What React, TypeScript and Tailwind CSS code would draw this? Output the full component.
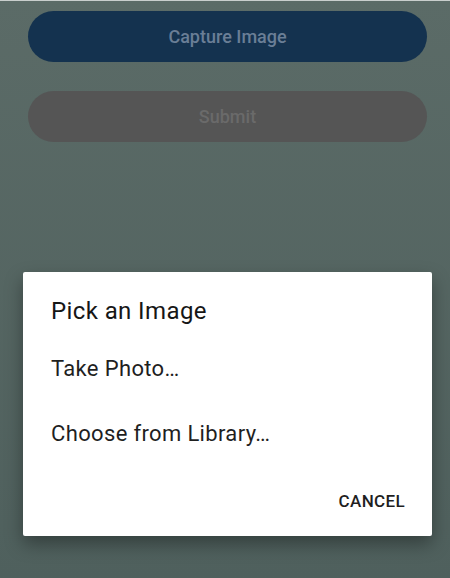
const App = () => {
  return (
    <div
      className="relative w-[450px] h-[578px] overflow-hidden flex flex-col bg-gradient-to-b from-[#5b6b67] to-[#4f605d] border-t border-[#c9cecd]"
      style={{ fontFamily: "Roboto, 'Liberation Sans', sans-serif" }}
    >
      <div className="flex flex-col gap-[29px] px-[28px] pt-[10px]">
        <button className="h-[51px] w-[399px] rounded-full bg-[#14324f] text-[18px] font-medium text-[#6a7e96]">
          Capture Image
        </button>
        <button className="h-[51px] w-[399px] rounded-full bg-[#555555] text-[18px] font-medium text-[#6a6a6a]">
          Submit
        </button>
      </div>

      <div className="mt-[130px] ml-[23px] w-[409px] h-[264px] bg-white rounded-[2px] shadow-[0_8px_18px_rgba(0,0,0,0.35)] flex flex-col pl-[28px] pr-[27px] pt-[25px]">
        <h2 className="text-[24px] leading-[28px] tracking-[0.4px] text-[#161616]">Pick an Image</h2>
        <p className="mt-[32px] text-[22px] leading-[24px] tracking-[0.35px] text-[#1f1f1f]">Take Photo…</p>
        <p className="mt-[41px] text-[22px] leading-[24px] tracking-[0.35px] text-[#1f1f1f]">Choose from Library…</p>
        <div className="mt-[45px] flex justify-end">
          <span className="text-[17px] leading-[20px] tracking-[0.35px] font-medium text-[#1f1f1f]">CANCEL</span>
        </div>
      </div>
    </div>
  );
};

export default App;
